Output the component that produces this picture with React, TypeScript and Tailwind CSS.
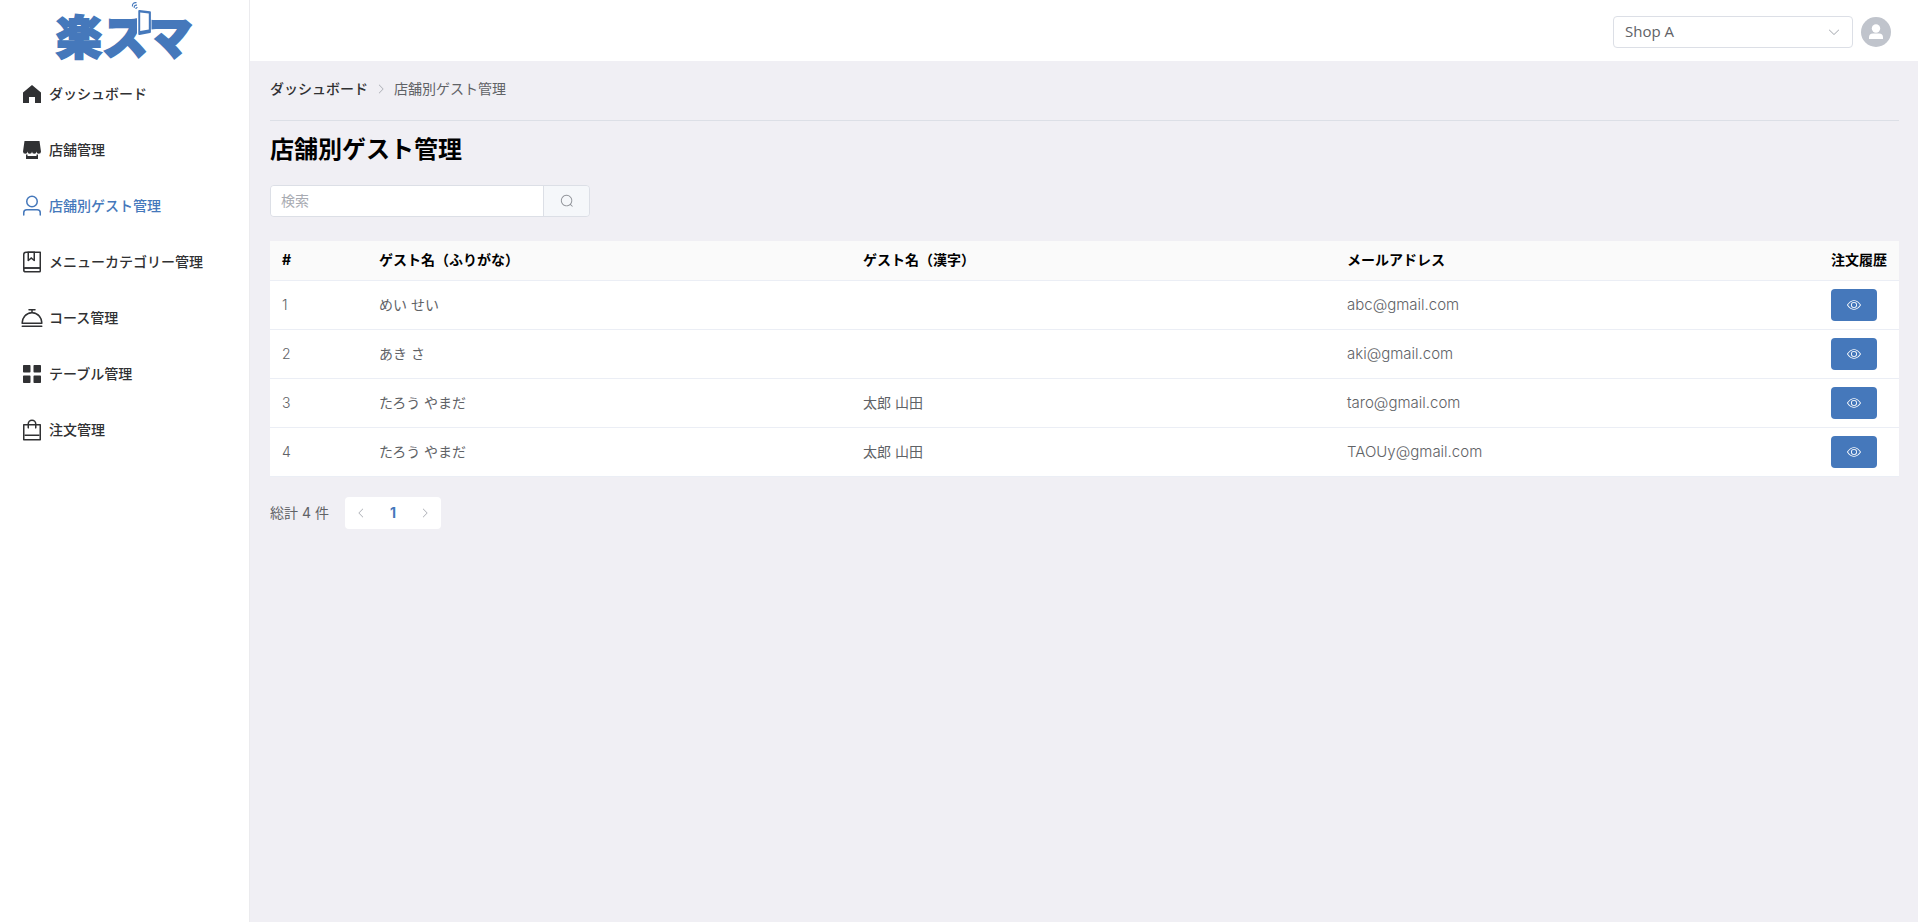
import React from 'react';

const icons = {
  home: ['M512 128 128 447.936V896h255.936V640H640v256h255.936V447.936z'],
  shop: [
    'M704 704h64v192H256V704h64v64h384v-64zm188.544-152.192C894.528 559.616 896 567.616 896 576a96 96 0 1 1-192 0 96 96 0 1 1-192 0 96 96 0 1 1-192 0 96 96 0 1 1-192 0c0-8.384 1.408-16.384 3.392-24.192L192 128h640l60.544 423.808z',
  ],
  user: [
    'M512 512a192 192 0 1 0 0-384 192 192 0 0 0 0 384zm0 64a256 256 0 1 1 0-512 256 256 0 0 1 0 512zm320 320v-96a96 96 0 0 0-96-96H288a96 96 0 0 0-96 96v96a32 32 0 1 1-64 0v-96a160 160 0 0 1 160-160h448a160 160 0 0 1 160 160v96a32 32 0 1 1-64 0z',
  ],
  notebook: [
    'M192 736h640V128H256a64 64 0 0 0-64 64v544zm64-672h608a32 32 0 0 1 32 32v672a32 32 0 0 1-32 32H160l-32 57.536V192A128 128 0 0 1 256 64z',
    'M240 800a48 48 0 1 0 0 96h592v-96H240zm0-64h656v160a64 64 0 0 1-64 64H240a112 112 0 0 1 0-224zm144-608v250.88l96-76.8 96 76.8V128H384zm-64-64h320v381.44a32 32 0 0 1-51.968 24.96L480 384l-108.032 86.4A32 32 0 0 1 320 445.44V64z',
  ],
  dish: [
    'M480 257.152V192h-96a32 32 0 0 1 0-64h256a32 32 0 1 1 0 64h-96v65.152A448 448 0 0 1 955.52 768H68.48A448 448 0 0 1 480 257.152zM128 704h768a384 384 0 1 0-768 0zM96 832h832a32 32 0 1 1 0 64H96a32 32 0 1 1 0-64z',
  ],
  grid: [
    'M160 448a32 32 0 0 1-32-32V160.064a32 32 0 0 1 32-32h256a32 32 0 0 1 32 32V416a32 32 0 0 1-32 32H160zm448 0a32 32 0 0 1-32-32V160.064a32 32 0 0 1 32-32h255.936a32 32 0 0 1 32 32V416a32 32 0 0 1-32 32H608zM160 896a32 32 0 0 1-32-32V608a32 32 0 0 1 32-32h256a32 32 0 0 1 32 32v256a32 32 0 0 1-32 32H160zm448 0a32 32 0 0 1-32-32V608a32 32 0 0 1 32-32h255.936a32 32 0 0 1 32 32v256a32 32 0 0 1-32 32H608z',
  ],
  bag: [
    'M704 320v96a32 32 0 0 1-32 32h-32V320H384v128h-32a32 32 0 0 1-32-32v-96H192v576h640V320H704zm-384-64a192 192 0 1 1 384 0h160a32 32 0 0 1 32 32v640a32 32 0 0 1-32 32H160a32 32 0 0 1-32-32V288a32 32 0 0 1 32-32h160zm64 0h256a128 128 0 1 0-256 0z',
    'M192 704h640v64H192z',
  ],
  view: [
    'M512 160c320 0 512 352 512 352S832 864 512 864 0 512 0 512s192-352 512-352zm0 64c-225.28 0-384.128 208.064-436.8 288 52.608 79.872 211.456 288 436.8 288 225.28 0 384.128-208.064 436.8-288-52.608-79.872-211.456-288-436.8-288zm0 64a224 224 0 1 1 0 448 224 224 0 0 1 0-448zm0 64a160.192 160.192 0 0 0-160 160c0 88.192 71.744 160 160 160s160-71.808 160-160-71.744-160-160-160z',
  ],
  search: [
    'm795.904 750.72 124.992 124.928a32 32 0 0 1-45.248 45.248L750.656 795.904a416 416 0 1 1 45.248-45.248zM480 832a352 352 0 1 0 0-704 352 352 0 0 0 0 704z',
  ],
  down: [
    'M831.872 340.864 512 652.672 192.128 340.864a30.592 30.592 0 0 0-42.752 0 29.12 29.12 0 0 0 0 41.6L489.664 714.24a32 32 0 0 0 44.672 0l340.288-331.712a29.12 29.12 0 0 0 0-41.728 30.592 30.592 0 0 0-42.752 0z',
  ],
  right: [
    'M340.864 149.312a30.592 30.592 0 0 0 0 42.752L652.736 512 340.864 831.872a30.592 30.592 0 0 0 0 42.752 29.12 29.12 0 0 0 41.728 0L714.24 534.336a32 32 0 0 0 0-44.672L382.592 149.376a29.12 29.12 0 0 0-41.728 0z',
  ],
};

type IconName = keyof typeof icons;

const Icon = ({ name, className }: { name: IconName; className: string }) => (
  <svg viewBox="0 0 1024 1024" fill="currentColor" className={className} aria-hidden="true">
    {icons[name].map((d) => (
      <path key={d} d={d} />
    ))}
  </svg>
);

const Logo = () => (
  <svg viewBox="0 0 144 68" className="w-36 h-[68px] overflow-visible" role="img" aria-label="楽スマ">
    <text
      x="2"
      y="54"
      fontSize="46"
      fontWeight="900"
      fill="#4578bb"
      stroke="#4578bb"
      strokeWidth="2"
      className="font-['Noto_Sans_CJK_JP',sans-serif]"
    >
      楽スマ
    </text>
    {/* Phone with signal waves */}
    <path d="M83 9h14.500v27.500H83z" fill="#fff" />
    <path d="M85.500 10 96 11.200a1 1 0 0 1 .9 1V32a1 1 0 0 1-.9 1l-10.500 2a1 1 0 0 1-1.200-1V11a1 1 0 0 1 1.200-1z" fill="#4578bb" />
    <path d="M86.200 12.500 94.800 13.400V29.500L86.200 31z" fill="#fff" />
    <path
      d="M78.500 6.500c-.6-2.600 1.600-4.400 4-3.800M80.300 7.800c-.5-1.800 1-3 2.700-2.700M82 9c-.2-1 .5-1.600 1.500-1.500"
      fill="none"
      stroke="#4578bb"
      strokeWidth="1.200"
    />
  </svg>
);

const menuItems: { icon: IconName; label: string; active?: boolean }[] = [
  { icon: 'home', label: 'ダッシュボード' },
  { icon: 'shop', label: '店舗管理' },
  { icon: 'user', label: '店舗別ゲスト管理', active: true },
  { icon: 'notebook', label: 'メニューカテゴリー管理' },
  { icon: 'dish', label: 'コース管理' },
  { icon: 'grid', label: 'テーブル管理' },
  { icon: 'bag', label: '注文管理' },
];

const guests = [
  { id: 1, kana: 'めい せい', kanji: '', email: 'abc@gmail.com' },
  { id: 2, kana: 'あき さ', kanji: '', email: 'aki@gmail.com' },
  { id: 3, kana: 'たろう やまだ', kanji: '太郎 山田', email: 'taro@gmail.com' },
  { id: 4, kana: 'たろう やまだ', kanji: '太郎 山田', email: 'TAOUy@gmail.com' },
];

const Sidebar = () => (
  <aside className="w-[250px] shrink-0 bg-white border-r border-[#ebebee]">
    <a href="#" className="flex h-[66px] pl-[54px]">
      <Logo />
    </a>
    <nav>
      {menuItems.map((item) => (
        <a
          key={item.label}
          href="#"
          className={`flex items-center h-14 pl-5 gap-[5px] text-sm font-medium ${
            item.active ? 'text-[#4578bb]' : 'text-[#303133]'
          }`}
        >
          <Icon name={item.icon} className="w-6 h-6" />
          <span>{item.label}</span>
        </a>
      ))}
    </nav>
  </aside>
);

const Header = () => (
  <header className="flex items-center justify-end gap-2 h-[61px] pt-[3px] pr-[27px] bg-white">
    <div className="relative w-60">
      <select
        aria-label="店舗"
        className="block w-full h-8 pl-[11px] pr-8 appearance-none rounded border border-[#dcdfe6] bg-white text-[15px] text-[#606266] font-['Open_Sans',sans-serif]"
      >
        <option>Shop A</option>
      </select>
      <Icon name="down" className="absolute right-3 top-[9px] w-3.5 h-3.5 text-[#a8abb2] pointer-events-none" />
    </div>
    <button aria-label="アカウント" className="w-[30px] h-[30px] rounded-full bg-[#c0c4cc]">
      <svg viewBox="0 0 30 30" fill="#fff" className="w-full h-full">
        <circle cx="15" cy="11.500" r="4.200" />
        <path d="M8 22v-1.500a4 4 0 0 1 4-4h6a4 4 0 0 1 4 4V22z" />
      </svg>
    </button>
  </header>
);

const App = () => {
  return (
    <div className="flex min-h-screen bg-[#f0eff4] text-sm text-[#606266] font-[Inter,'Noto_Sans_CJK_JP',sans-serif]">
      <Sidebar />
      <div className="flex-1 min-w-0">
        <Header />
        <main className="pl-5 pr-[19px]">
          <nav className="flex items-center h-[60px] pb-[3px] gap-[7px] border-b border-[#dcdfe6]">
            <a href="#" className="font-medium text-[#303133]">
              ダッシュボード
            </a>
            <Icon name="right" className="w-3 h-3 text-[#a8abb2]" />
            <span>店舗別ゲスト管理</span>
          </nav>

          <h1 className="pt-[11px] text-2xl leading-9 font-bold text-black">店舗別ゲスト管理</h1>

          <form className="flex w-80 h-8 mt-[17px] rounded border border-[#dcdfe6] overflow-hidden">
            <input
              type="text"
              aria-label="検索"
              placeholder="検索"
              className="flex-1 min-w-0 px-2.5 bg-white placeholder:text-[#a8abb2]"
            />
            <button
              type="button"
              aria-label="検索する"
              className="flex items-center justify-center w-[46px] border-l border-[#dcdfe6] bg-[#f5f7fa] text-[#909399]"
            >
              <Icon name="search" className="w-3.5 h-3.5" />
            </button>
          </form>

          <table className="w-full mt-6 table-fixed bg-white text-left">
            <thead>
              <tr className="h-[39px] border-b border-[#ebeef5] bg-[#fafafa] text-black">
                <th className="w-[97px] px-3 font-bold">#</th>
                <th className="px-3 font-bold">ゲスト名（ふりがな）</th>
                <th className="px-3 font-bold">ゲスト名（漢字）</th>
                <th className="px-3 font-bold">メールアドレス</th>
                <th className="w-20 px-3 font-bold whitespace-nowrap">注文履歴</th>
              </tr>
            </thead>
            <tbody>
              {guests.map((guest) => (
                <tr key={guest.id} className="h-[49px] border-b border-[#ebeef5]">
                  <td className="px-3 font-light">{guest.id}</td>
                  <td className="px-3">{guest.kana}</td>
                  <td className="px-3">{guest.kanji}</td>
                  <td className="px-3 text-[15px] font-light">{guest.email}</td>
                  <td className="px-3">
                    <button
                      aria-label="注文履歴を見る"
                      className="flex items-center justify-center w-[46px] h-8 rounded bg-[#4578bb] text-white"
                    >
                      <Icon name="view" className="w-3.5 h-3.5" />
                    </button>
                  </td>
                </tr>
              ))}
            </tbody>
          </table>

          <div className="flex items-center gap-4 mt-5">
            <span>総計 4 件</span>
            <div className="flex rounded-sm bg-white">
              <button aria-label="前へ" className="flex items-center justify-center w-8 h-8 text-[#a8abb2]">
                <Icon name="right" className="w-3 h-3 rotate-180" />
              </button>
              <button className="w-8 h-8 font-bold text-[#4578bb]">1</button>
              <button aria-label="次へ" className="flex items-center justify-center w-8 h-8 text-[#a8abb2]">
                <Icon name="right" className="w-3 h-3" />
              </button>
            </div>
          </div>
        </main>
      </div>
    </div>
  );
};

export default App;
